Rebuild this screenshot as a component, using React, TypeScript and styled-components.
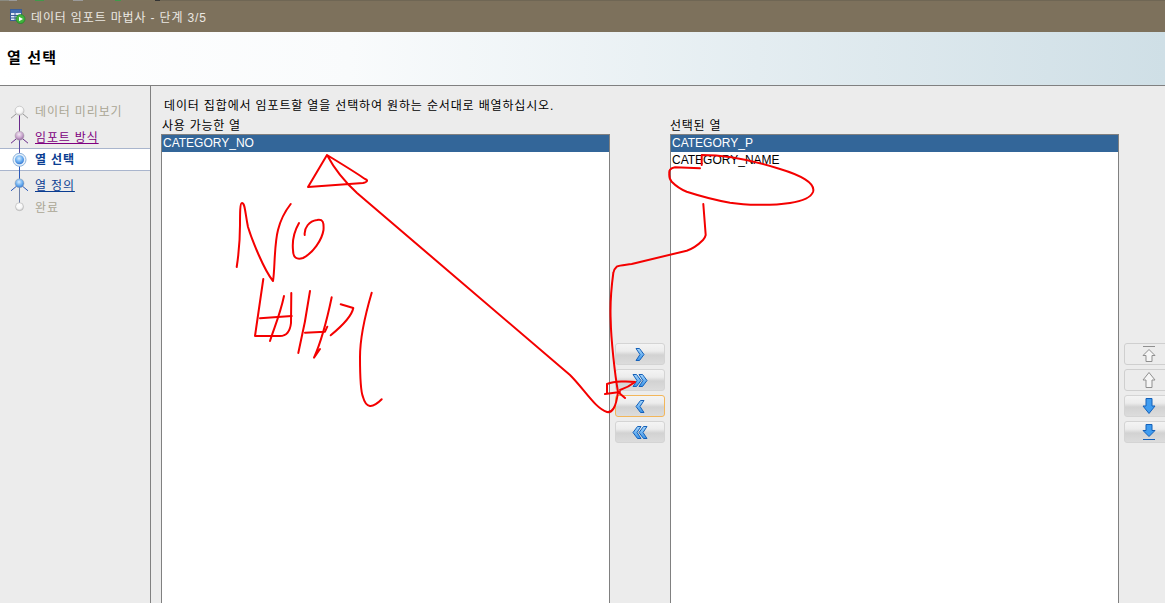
import styled, { createGlobalStyle } from 'styled-components';

const FONT = `"Liberation Sans", "Noto Sans CJK KR", sans-serif`;

const GlobalStyle = createGlobalStyle`
  html, body {
    margin: 0;
    height: 603px;
    overflow: hidden;
    background: #ececec;
  }
  * {
    box-sizing: border-box;
  }
`;

const Window = styled.div`
  position: relative;
  width: 1165px;
  height: 603px;
  overflow: hidden;
  display: flex;
  flex-direction: column;
  font-family: ${FONT};
  font-size: 12px;
  color: #000;
`;

// strip of the window behind, one pixel peeks out above the title bar
const BehindEdge = styled.div`
  height: 1px;
  flex: none;
  background: linear-gradient(
    90deg,
    #8a8a80 0 9px,
    #9a9a9a 9px 17px,
    #7d725c 17px 35px,
    #3f9a4a 35px 44px,
    #7d725c 44px 73px,
    #9a9a9a 73px 83px,
    #7d725c 83px 115px,
    #3f9a4a 115px 121px,
    #7d725c 121px 155px,
    #333 155px 160px,
    #6f6654 160px
  );
`;

const TitleBar = styled.div`
  height: 31px;
  flex: none;
  display: flex;
  align-items: center;
  gap: 5px;
  padding: 0 0 0 10px;
  background: #7d715c;
  color: #ebe8e2;
  letter-spacing: 0.85px;
`;

const Header = styled.div`
  height: 54px;
  flex: none;
  display: flex;
  align-items: center;
  padding: 0 0 4px 7px;
  background: linear-gradient(90deg, #ffffff 0%, #f9fbfc 30%, #cfdfe6 100%);
  border-bottom: 1px solid #808080;
  font-size: 15px;
  font-weight: 700;
  letter-spacing: 1.2px;
`;

const Body = styled.div`
  flex: 1;
  display: flex;
  min-height: 0;
`;

const Sidebar = styled.nav`
  width: 151px;
  flex: none;
  padding-top: 14px;
  border-right: 1px solid #808080;
  background: #ececec;
`;

const Step = styled.div<{ $active?: boolean; $space?: number }>`
  height: ${(p) => (p.$active ? 23 : 22)}px;
  margin-top: ${(p) => p.$space ?? 0}px;
  display: flex;
  align-items: center;
  gap: 7px;
  padding: 0 0 2px 10px;
  background: ${(p) => (p.$active ? '#fff' : 'transparent')};
  border-top: ${(p) => (p.$active ? '1px solid #a9b5cd' : 'none')};
  border-bottom: ${(p) => (p.$active ? '1px solid #a9b5cd' : 'none')};
`;

const StepLabel = styled.span<{ $color: string; $link?: boolean; $bold?: boolean }>`
  color: ${(p) => p.$color};
  font-weight: ${(p) => (p.$bold ? 700 : 400)};
  text-decoration: ${(p) => (p.$link ? 'underline' : 'none')};
  letter-spacing: 0.85px;
  white-space: nowrap;
`;

const Main = styled.main`
  flex: 1;
  min-width: 0;
  padding: 12px 0 0 10px;
`;

const Hint = styled.div`
  height: 18px;
  padding-left: 3px;
  line-height: 17px;
  letter-spacing: 0.85px;
  white-space: nowrap;
`;

const Columns = styled.div`
  display: grid;
  grid-template-columns: 449px 60px 449px 46px;
`;

const ListColumn = styled.div`
  display: flex;
  flex-direction: column;
`;

const ListLabel = styled.div<{ $pad: number }>`
  height: 18px;
  padding: 2px 0 0 ${(p) => p.$pad}px;
  line-height: 16px;
  letter-spacing: 0.75px;
  white-space: nowrap;
`;

const ListBox = styled.div`
  height: 480px;
  background: #fff;
  border: 1px solid #808080;
`;

const ListRow = styled.div<{ $selected?: boolean }>`
  height: 17px;
  padding-left: 1px;
  line-height: 17px;
  background: ${(p) => (p.$selected ? '#336699' : 'transparent')};
  color: ${(p) => (p.$selected ? '#fff' : '#000')};
  white-space: nowrap;
`;

const ButtonStack = styled.div`
  display: flex;
  flex-direction: column;
  gap: 4px;
  padding: 227px 0 0 5px;
`;

const MoveButton = styled.button<{ $focused?: boolean; $disabled?: boolean }>`
  width: 50px;
  height: 22px;
  padding: 0;
  flex: none;
  display: flex;
  align-items: center;
  justify-content: center;
  border-radius: 3px;
  border: 1px solid ${(p) => (p.$focused ? '#f2b65a' : p.$disabled ? '#cfcfcf' : '#d4d4d4')};
  background: ${(p) =>
    p.$disabled
      ? '#ececec'
      : 'linear-gradient(180deg, #f4f4f4 0%, #ececec 35%, #d2d2d2 55%, #dcdcdc 100%)'};
`;

const Overlay = styled.svg`
  position: absolute;
  left: 0;
  top: 0;
  pointer-events: none;
`;

const BLUE_STOPS = ['#d8ecff', '#6aaef0', '#2a6ccc'];
const PURPLE_STOPS = ['#f4eaf4', '#c8a4cc', '#8a5a98'];
const WHITE_STOPS = ['#ffffff', '#f6f6f6', '#c4c4c4'];

type Ball = {
  id: string;
  stops: string[];
  cy: number;
  legs?: string;
  down?: string;
  len?: number;
  ring?: boolean;
  r?: number;
};

const StepIcon = ({ id, stops, cy, legs, down, len = 0, ring, r = 4.5 }: Ball) => (
  <svg width="18" height="22" viewBox="0 0 18 22" style={{ overflow: 'visible', flex: 'none' }}>
    <defs>
      <radialGradient id={id} cx="45%" cy="35%" r="70%">
        <stop offset="0%" stopColor={stops[0]} />
        <stop offset="55%" stopColor={stops[1]} />
        <stop offset="100%" stopColor={stops[2]} />
      </radialGradient>
    </defs>
    {down && <line x1="9.5" y1={cy} x2="9.5" y2={cy + len} stroke={down} />}
    {legs && (
      <path
        d={`M1 ${cy + 7.5} L7 ${cy + 2.5} M18 ${cy + 7.5} L12 ${cy + 2.5}`}
        fill="none"
        stroke={legs}
      />
    )}
    {ring && <circle cx="9.5" cy={cy} r="6.5" fill="#e6f0fa" stroke="#8fb4dc" />}
    <circle
      cx="9.5"
      cy={cy}
      r={r}
      fill={`url(#${id})`}
      stroke={ring ? 'none' : '#a8a8a8'}
      strokeWidth="0.5"
    />
  </svg>
);

const TableIcon = () => (
  <svg width="16" height="15" viewBox="0 0 16 15">
    <rect x="0.5" y="0.5" width="11" height="11" fill="#dfe8f4" stroke="#3a5d96" />
    <rect x="1" y="1" width="10" height="3" fill="#3f6cb0" />
    <path d="M1 6.5H11M1 9H11M5 4V11" stroke="#3a5d96" />
    <circle cx="10.5" cy="10" r="4.5" fill="#3fb53c" stroke="#1e7f22" strokeWidth="0.7" />
    <path d="M9 7.8L13 10L9 12.2Z" fill="#fff" />
  </svg>
);

const CHEVRON = 'M1 0.5 L4.5 0.5 L9 6.5 L4.5 12.5 L1 12.5 L5 6.5 Z';

const Chevrons = ({ count, flip }: { count: number; flip?: boolean }) => {
  const w = count === 2 ? 16 : 10;
  return (
    <svg width={w} height="13" viewBox={`0 0 ${w} 13`}>
      <defs>
        <linearGradient id="chev" x1="0" y1="0" x2="0" y2="1">
          <stop offset="0%" stopColor="#a6d6fb" />
          <stop offset="100%" stopColor="#3a94ea" />
        </linearGradient>
      </defs>
      <g transform={flip ? `translate(${w},0) scale(-1,1)` : undefined}>
        <path d={CHEVRON} fill="url(#chev)" stroke="#1560b8" strokeWidth="1" />
        {count === 2 && (
          <path
            d={CHEVRON}
            transform="translate(6,0)"
            fill="url(#chev)"
            stroke="#1560b8"
            strokeWidth="1"
          />
        )}
      </g>
    </svg>
  );
};

const ARROW_PLAIN = 'M7 0.5 L13 8 H10 V15.5 H4 V8 H1 Z';
const ARROW_BARRED = 'M7 3.5 L13 9.5 H10 V15.5 H4 V9.5 H1 Z';

const VArrow = ({ dir, bar, off }: { dir: 'up' | 'down'; bar?: boolean; off?: boolean }) => {
  const stroke = off ? '#8f8f8f' : '#1560b8';
  const fill = off ? '#f6f6f6' : '#3f9cf0';
  return (
    <svg width="14" height="16" viewBox="0 0 14 16">
      <g transform={dir === 'down' ? 'translate(0,16) scale(1,-1)' : undefined}>
        {bar && <line x1="1" y1="0.5" x2="13" y2="0.5" stroke={stroke} />}
        <path d={bar ? ARROW_BARRED : ARROW_PLAIN} fill={fill} stroke={stroke} />
      </g>
    </svg>
  );
};

// handwritten red marks on top of the dialog
const strokes = [
  // N
  'M236.7 267 C239 252 240 240 240 225 C240 213 240 203 242 203 C245 203 245 212 248 227 C252 240 264 270 273 281 C275 270 274 245 278 230 C281 218 286 210 290.7 204',
  // O
  'M304.7 235 C304 228 309 221 317 220 C323 219 324 222 323.5 230 C322 240 313 253 303 258 C297 260 293 258 293 250 C292 240 295 230 299 223',
  // 바
  'M263.3 279 L255 336 L280 336 C286 336 290 332 291 323 L291.3 293',
  'M260 318.3 L291.7 316',
  'M284 296 C280 315 274 328 270 341',
  // 끼 strokes
  'M310 291 C307 312 303 333 298.3 353',
  'M305 332.7 L325 331.7 L327.3 326.7',
  'M331.7 297.3 C328 315 322 340 314 357.7 L320 349',
  'M340.7 304.3 L353.3 308 C352 315 342 326 330.7 335.3',
  'M371.7 292.7 C366 312 360 335 360 357 C360 375 360 390 363 397 C366 408 372 409 381.7 399.3',
  // triangle and long arrow
  'M327 155 L308 187 L363 183 C368 182 368 180 365 179 C355 172 340 163 327 155 C335 170 345 182 357 193 L570 375 C585 390 595 408 607 412 C612 413 616 408 618 392',
  // ellipse
  'M700 168.3 L675 167.3 C670 168 669 171 669.3 173 C669 177 670 180 671.7 181.7 C676 186 680 189 686.7 191.7 C700 196 715 200 730 202.7 C745 205 770 206 790 203 C803 201 811 197 813 192 C816 183 800 175 780 169 C755 161 725 155 701.7 155 L701.7 165',
  // path to the arrow buttons
  'M703.3 204 L705.7 235 C705 238 704 239 703 240 C698 245 692 249 686.7 250.7 L631.7 264 C625 265 620 265 616.7 266.7 C614 269 613.5 271 613.3 273 C611 290 610 305 610.7 320 C611 340 615 375 618 392 L625 398',
  'M605 394 L620 392',
  'M607 393 L607 384 C615 381 628 381 635 382 C630 386 626 388 620 390',
];

const steps = [
  { key: 'preview', label: '데이터 미리보기', color: '#aaa694', space: 0 },
  { key: 'mode', label: '임포트 방식', color: '#800080', link: true, space: 4 },
  { key: 'cols', label: '열 선택', color: '#0a3d91', bold: true, active: true, space: 0 },
  { key: 'define', label: '열 정의', color: '#0a3d91', link: true, space: 3 },
  { key: 'done', label: '완료', color: '#aaa694', space: 0 },
];

const icons: Record<string, Ball> = {
  preview: { id: 'b1', stops: WHITE_STOPS, cy: 11.7, legs: '#999', down: '#6a2a8a', len: 25 },
  mode: { id: 'b2', stops: PURPLE_STOPS, cy: 10.7, legs: '#6a2a8a', down: '#5a4aa0', len: 24 },
  cols: { id: 'b3', stops: BLUE_STOPS, cy: 11.8, ring: true, down: '#2a58b8', len: 24 },
  define: { id: 'b4', stops: BLUE_STOPS, cy: 10.3, legs: '#2a58b8', down: '#6d7fa8', len: 23 },
  done: { id: 'b5', stops: WHITE_STOPS, cy: 11.7, r: 4 },
};

export default function App() {
  return (
    <Window>
      <GlobalStyle />
      <BehindEdge />
      <TitleBar>
        <TableIcon />
        <span>데이터 임포트 마법사 - 단계 3/5</span>
      </TitleBar>
      <Header>열 선택</Header>
      <Body>
        <Sidebar>
          {steps.map((s) => (
            <Step key={s.key} $active={s.active} $space={s.space}>
              <StepIcon {...icons[s.key]} />
              <StepLabel $color={s.color} $link={s.link} $bold={s.bold}>
                {s.label}
              </StepLabel>
            </Step>
          ))}
        </Sidebar>
        <Main>
          <Hint>데이터 집합에서 임포트할 열을 선택하여 원하는 순서대로 배열하십시오.</Hint>
          <Columns>
            <ListColumn>
              <ListLabel $pad={1}>사용 가능한 열</ListLabel>
              <ListBox>
                <ListRow $selected>CATEGORY_NO</ListRow>
              </ListBox>
            </ListColumn>
            <ButtonStack>
              <MoveButton>
                <Chevrons count={1} />
              </MoveButton>
              <MoveButton>
                <Chevrons count={2} />
              </MoveButton>
              <MoveButton $focused>
                <Chevrons count={1} flip />
              </MoveButton>
              <MoveButton>
                <Chevrons count={2} flip />
              </MoveButton>
            </ButtonStack>
            <ListColumn>
              <ListLabel $pad={0}>선택된 열</ListLabel>
              <ListBox>
                <ListRow $selected>CATEGORY_P</ListRow>
                <ListRow>CATEGORY_NAME</ListRow>
              </ListBox>
            </ListColumn>
            <ButtonStack>
              <MoveButton $disabled>
                <VArrow dir="up" bar off />
              </MoveButton>
              <MoveButton $disabled>
                <VArrow dir="up" off />
              </MoveButton>
              <MoveButton>
                <VArrow dir="down" />
              </MoveButton>
              <MoveButton>
                <VArrow dir="down" bar />
              </MoveButton>
            </ButtonStack>
          </Columns>
        </Main>
      </Body>
      <Overlay width="1165" height="603" viewBox="0 0 1165 603">
        {strokes.map((d) => (
          <path
            key={d}
            d={d}
            fill="none"
            stroke="#f40000"
            strokeWidth="2"
            strokeLinecap="round"
            strokeLinejoin="round"
          />
        ))}
      </Overlay>
    </Window>
  );
}
